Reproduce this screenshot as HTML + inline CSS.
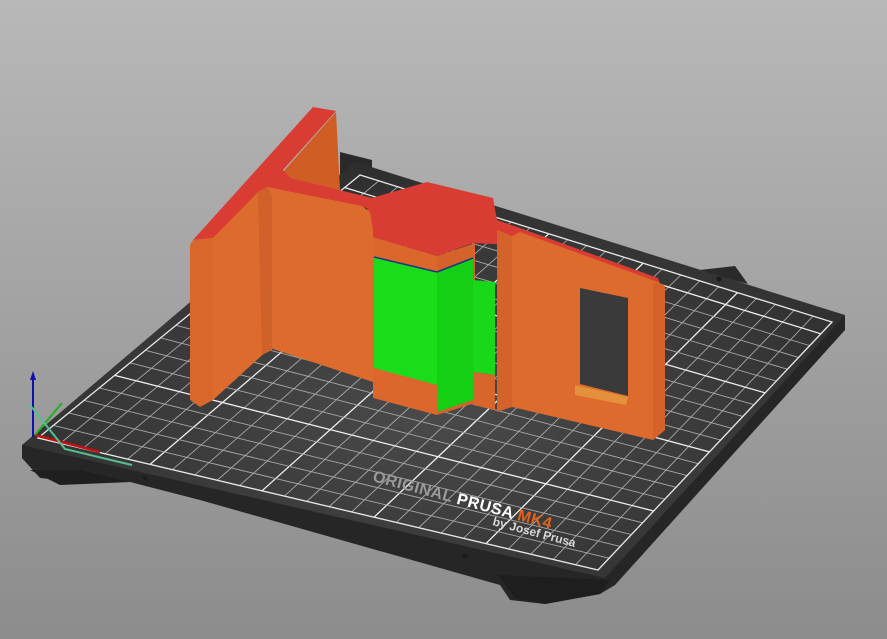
<!DOCTYPE html>
<html><head><meta charset="utf-8"><style>
html,body{margin:0;padding:0;width:887px;height:639px;overflow:hidden;background:linear-gradient(#b8b8b8,#8c8c8c);}
svg{position:absolute;left:0;top:0}
</style></head><body>
<svg id="s" width="887" height="639" viewBox="0 0 887 639" xmlns="http://www.w3.org/2000/svg">
<defs>
<radialGradient id="bg" cx="0.5" cy="0.6" r="0.6"><stop offset="0" stop-color="#4a4a4a"/><stop offset="1" stop-color="#2e2e2e"/></radialGradient>
</defs>
<!-- bed side/feet -->
<polygon points="22,445 22,458 40,478 80,482 130,482 200,500 500,585 510,600 545,604 600,594 615,585 845,330 845,315" fill="#262626"/>
<polygon points="30,470 60,485 130,482 80,470" fill="#1f1f1f"/>
<polygon points="498,575 515,598 545,604 600,594 610,580" fill="#1e1e1e"/>
<!-- back bumps -->
<polygon points="340,152 372,160 372,190 340,182" fill="#2a2a2a"/>
<polygon points="700,270 735,266 748,284 700,272" fill="#2a2a2a"/>
<!-- bed top -->
<polygon points="22,445 355,162 845,315 605,578" fill="url(#bg)"/>
<g id="grid" stroke-width="1"></g>
<polygon points="38,438 360,175 832,322 598,570" fill="none" stroke="#e8e8e8" stroke-width="1.3"/>
<text x="0" y="0" transform="translate(372,481) rotate(15)" font-family="Liberation Sans, sans-serif" font-size="16" font-weight="bold" fill="#9a9a9a" letter-spacing="0.5">ORIGINAL <tspan fill="#ffffff">PRUSA</tspan> <tspan fill="#e0631f">MK4</tspan></text>
<text x="0" y="0" transform="translate(492,525) rotate(15)" font-family="Liberation Sans, sans-serif" font-size="12" font-weight="bold" fill="#d8d8d8">by Josef Prusa</text>
<circle cx="465" cy="556" r="2.5" fill="#1a1a1a"/><circle cx="145" cy="478" r="2" fill="#1a1a1a"/><circle cx="719" cy="279" r="2.5" fill="#1a1a1a"/>
<!-- axes -->
<line x1="33" y1="437" x2="33" y2="378" stroke="#1010b0" stroke-width="2"/>
<polygon points="30,380 36,380 33,371" fill="#1010b0"/>
<line x1="35" y1="435" x2="100" y2="452" stroke="#c01010" stroke-width="2.5"/>
<line x1="35" y1="435" x2="62" y2="403" stroke="#20b020" stroke-width="2"/>
<polyline points="30,405 65,449 132,465" fill="none" stroke="#50c090" stroke-width="2"/>
<!-- object: back wall face -->
<polygon points="283,172 336,112 340,190 290,190" fill="#cf5d24"/>
<!-- red tops -->
<polygon points="193,240 313,107 336,111 283,170 290,178 372,198 427,182 493,198 497,220 520,228 658,278 662,290 515,245 473,243 437,256 373,237 367,208 267,187 213,238" fill="#d83c32"/>
<!-- left panel thin edge -->
<polygon points="190,245 193,240 213,238 213,400 200,407 190,400" fill="#d9672b"/>
<!-- left panel face -->
<polygon points="213,238 258,192 267,187 362,206 370,212 373,230 373,382 270,348 213,400" fill="#dd6b2d"/>
<polygon points="258,192 267,187 272,195 272,350 262,355" fill="#d0612a"/>
<!-- hex column -->
<polygon points="373,237 437,256 437,415 373,398" fill="#db672c"/>
<polygon points="437,256 475,243 475,403 437,415" fill="#d4622a"/>
<polygon points="374,258 437,272 437,385 374,368" fill="#1bdc1b"/>
<polygon points="437,272 473,258 473,400 437,412" fill="#14cf14"/>
<line x1="374" y1="257" x2="437" y2="272" stroke="#1a3a80" stroke-width="1.5"/>
<line x1="437" y1="272" x2="473" y2="258" stroke="#1a3a80" stroke-width="1.5"/>
<polygon points="473,280 495,282 495,375 473,372" fill="#19d819"/>
<polygon points="473,372 495,375 495,410 473,405" fill="#d8652b"/>
<!-- right panel -->
<polygon points="497,230 512,236 512,407 497,412" fill="#d4622a"/>
<polygon points="512,236 520,232 658,282 665,286 665,430 653,440 512,407" fill="#dd6b2d"/>
<polygon points="653,282 665,286 665,430 653,440" fill="#d4622a"/>
<polygon points="580,288 628,298 628,396 580,384" fill="#3a3a3a"/>
<polygon points="575,385 628,397 626,405 575,395" fill="#e8a040" opacity="0.7"/>
</svg>
<script>
(function(){
var L=[38,438],B=[360,175],R=[832,322],F=[598,570];
function lerp(a,b,t){return [a[0]+(b[0]-a[0])*t,a[1]+(b[1]-a[1])*t];}
var g=document.getElementById('grid'),h='';
var n1=25,n2=21;
for(var i=1;i<n1;i++){var t=i/n1;var p=lerp(L,F,t),q=lerp(B,R,t);var maj=i%5==0;
h+='<line x1="'+p[0]+'" y1="'+p[1]+'" x2="'+q[0]+'" y2="'+q[1]+'" stroke="'+(maj?'#f0f0f0':'#a8a8a8')+'" stroke-width="'+(maj?1.3:0.9)+'"/>';}
for(var j=1;j<n2;j++){var t=j/n2;var p=lerp(L,B,t),q=lerp(F,R,t);var maj=j%5==0;
h+='<line x1="'+p[0]+'" y1="'+p[1]+'" x2="'+q[0]+'" y2="'+q[1]+'" stroke="'+(maj?'#f0f0f0':'#a8a8a8')+'" stroke-width="'+(maj?1.3:0.9)+'"/>';}
g.innerHTML=h;
})();
</script>
</body></html>
